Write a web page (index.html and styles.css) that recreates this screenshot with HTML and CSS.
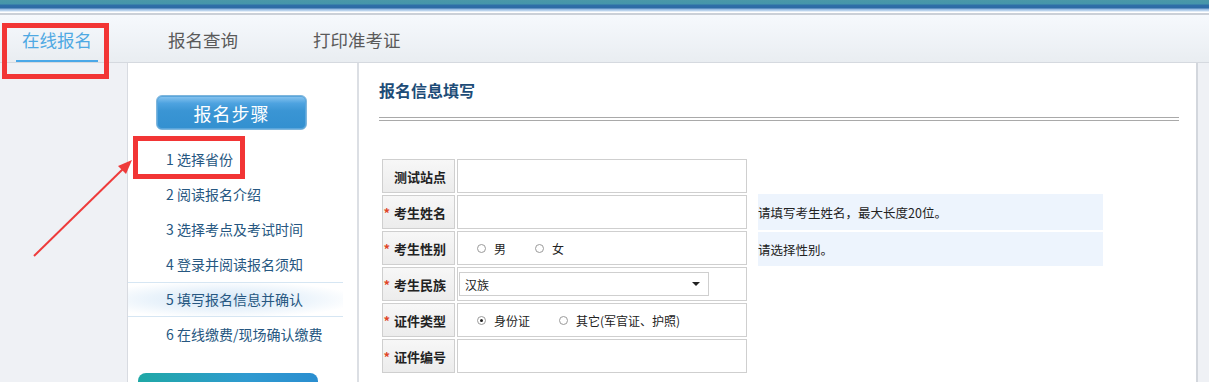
FILE: index.html
```html
<!DOCTYPE html>
<html lang="zh-CN">
<head>
<meta charset="utf-8">
<title>在线报名</title>
<link rel="stylesheet" href="styles.css">
</head>
<body>
<div class="topband"></div>
<div class="nav">
  <a class="nav-item active">在线报名</a>
  <a class="nav-item">报名查询</a>
  <a class="nav-item">打印准考证</a>
</div>
<div class="page">
  <aside class="sidebar">
    <div class="steps-btn">报名步骤</div>
    <ul class="steps">
      <li>1 选择省份</li>
      <li>2 阅读报名介绍</li>
      <li>3 选择考点及考试时间</li>
      <li>4 登录并阅读报名须知</li>
      <li class="current">5 填写报名信息并确认</li>
      <li>6 在线缴费/现场确认缴费</li>
    </ul>
    <div class="teal-btn"></div>
  </aside>
  <main class="main">
    <h2 class="title">报名信息填写</h2>
    <div class="dline"></div>
    <div class="form">
      <div class="row">
        <div class="label">测试站点</div>
        <div class="value"></div>
      </div>
      <div class="row">
        <div class="label"><span class="req">*</span> 考生姓名</div>
        <div class="value"></div>
        <div class="hint">请填写考生姓名，最大长度20位。</div>
      </div>
      <div class="row">
        <div class="label"><span class="req">*</span> 考生性别</div>
        <div class="value radios">
          <span class="opt"><i class="radio"></i>男</span>
          <span class="opt"><i class="radio"></i>女</span>
        </div>
        <div class="hint hint2">请选择性别。</div>
      </div>
      <div class="row">
        <div class="label"><span class="req">*</span> 考生民族</div>
        <div class="value">
          <div class="select"><span>汉族</span><i class="caret"></i></div>
        </div>
      </div>
      <div class="row">
        <div class="label"><span class="req">*</span> 证件类型</div>
        <div class="value radios">
          <span class="opt"><i class="radio checked"></i>身份证</span>
          <span class="opt opt-wide"><i class="radio"></i>其它(军官证、护照)</span>
        </div>
      </div>
      <div class="row">
        <div class="label"><span class="req">*</span> 证件编号</div>
        <div class="value"></div>
      </div>
    </div>
  </main>
  <div class="rest"></div>
</div>

<div class="mark mark-nav"></div>
<div class="mark mark-step"></div>
<svg class="arrow" width="1209" height="382" viewBox="0 0 1209 382">
  <line x1="34" y1="256" x2="125" y2="167" stroke="#ee3b3b" stroke-width="2"/>
  <polygon points="132,160 118,166 126,174" fill="#ee3b3b"/>
</svg>
</body>
</html>
```

FILE: styles.css
```css
* { box-sizing: border-box; }
html, body { margin: 0; padding: 0; }
body {
  width: 1209px;
  height: 382px;
  overflow: hidden;
  background: #eff1f5;
  font-family: "Noto Sans CJK SC", "Noto Sans", sans-serif;
  position: relative;
}

.topband {
  height: 15px;
  background: linear-gradient(to bottom,
    #4a98a8 0px, #4596ab 4px, #2f6fa8 5px, #2d6aa4 8px,
    #8fb6de 9px, #c7dcf2 11px, #ffffff 12px, #ffffff 13px,
    #cbd0d8 13px, #cbd0d8 15px);
}

.nav {
  height: 48px;
  display: flex;
  align-items: stretch;
  background: linear-gradient(to bottom, #f6f9fd, #e9edf1);
  border-bottom: 1px solid #d5d9df;
  padding-left: 16px;
}
.nav-item {
  display: flex;
  align-items: center;
  font-size: 17.5px;
  color: #5a5a5a;
  padding: 3px 6px 0;
  border-bottom: 2px solid transparent;
}
.nav-item.active {
  color: #4fa9e3;
  border-bottom-color: #4aa8e8;
  margin-right: 64px;
}
.nav-item:nth-child(2) { margin-right: 63px; }

.page {
  display: flex;
  height: 319px;
}

.sidebar {
  margin-left: 127px;
  width: 232px;
  background: #fff;
  border-left: 1px solid #d8dbe1;
  border-right: 2px solid #dcdfe4;
  padding-top: 32px;
}
.steps-btn {
  margin-left: 28px;
  width: 151px;
  height: 35px;
  border-radius: 6px;
  border: 1px solid #7fb6dc;
  background: linear-gradient(to bottom, #8cc6f0 0%, #4ea3e0 22%, #3a95d4 45%, #3390d0 100%);
  box-shadow: inset 0 0 0 1px #5aa6dc;
  color: #fff;
  font-size: 18px;
  display: flex;
  align-items: center;
  justify-content: center;
  letter-spacing: 1px;
}
.steps {
  list-style: none;
  margin: 12px 0 0;
  padding: 0;
}
.steps li {
  height: 35px;
  line-height: 35px;
  padding-left: 38px;
  font-size: 14px;
  color: #265781;
}
.steps li.current {
  margin-right: 14px;
  border-top: 1px solid #d6e6f3;
  border-bottom: 1px solid #d6e6f3;
  line-height: 33px;
  background: radial-gradient(ellipse at 45% 50%, #d6e7f7 0%, #eaf3fb 45%, #ffffff 80%);
}
.teal-btn {
  margin: 21px 0 0 10px;
  width: 180px;
  height: 20px;
  border-radius: 8px 8px 0 0;
  background: linear-gradient(to right, #1fa8a6, #2f9ad0 60%, #2a8ed0);
}

.main {
  width: 839px;
  background: #fff;
  border-right: 2px solid #d3d7dd;
  padding: 16px 0 0 20px;
}
.title {
  margin: 0;
  font-size: 16px;
  line-height: 22px;
  font-weight: bold;
  color: #1d4c77;
}
.dline {
  margin-top: 16px;
  width: 800px;
  height: 4px;
  border-top: 1px solid #a9a9a9;
  border-bottom: 1px solid #a9a9a9;
}
.form {
  margin: 38px 0 0 3px;
  display: flex;
  flex-direction: column;
  gap: 2px;
}
.row {
  display: flex;
  height: 34px;
}
.label {
  width: 73px;
  border: 1px solid #cfcfcf;
  background: linear-gradient(to bottom, #f7f7f7, #ececec);
  font-size: 13px;
  font-weight: bold;
  color: #222;
  display: flex;
  align-items: center;
  justify-content: flex-end;
  padding-right: 8px;
}
.req { color: #e0462a; margin-right: 4px; font-weight: bold; }
.value {
  margin-left: 2px;
  width: 290px;
  border: 1px solid #cfcfcf;
  background: #fff;
  display: flex;
  align-items: center;
}
.hint {
  margin-left: 11px;
  margin-top: -1px;
  width: 345px;
  height: 36px;
  background: #edf4fd;
  font-size: 12.5px;
  color: #222;
  display: flex;
  align-items: center;
}
.hint2 { margin-top: 0; height: 35px; border-top: 1px solid #fff; }
.radios { padding-left: 19px; font-size: 12px; color: #222; }
.opt { display: inline-flex; align-items: center; margin-right: 29px; }
.opt-wide { margin-right: 0; }
.radio {
  width: 9px;
  height: 9px;
  border-radius: 50%;
  border: 1px solid #9a9a9a;
  margin-right: 8px;
  position: relative;
  background: #fff;
}
.radio.checked::after {
  content: "";
  position: absolute;
  left: 2px; top: 2px;
  width: 3px; height: 3px;
  border-radius: 50%;
  background: #222;
}
.select {
  margin-left: 1px;
  width: 250px;
  height: 24px;
  border: 1px solid #cfcfcf;
  display: flex;
  align-items: center;
  justify-content: space-between;
  padding: 0 8px 0 5px;
  font-size: 12px;
  color: #222;
}
.caret {
  width: 0; height: 0;
  border-left: 4px solid transparent;
  border-right: 4px solid transparent;
  border-top: 4px solid #222;
}
.rest { flex: 1; }

.mark {
  position: absolute;
  border: 5px solid #f23535;
}
.mark-nav { left: 2px; top: 23px; width: 107px; height: 56px; }
.mark-step { left: 133px; top: 136px; width: 112px; height: 43px; }
.arrow { position: absolute; left: 0; top: 0; pointer-events: none; }
```
